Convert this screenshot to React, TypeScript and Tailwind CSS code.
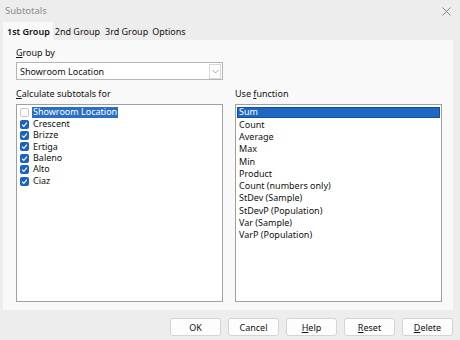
import React from "react";

const U = ({ c }: { c: string }) => <span className="underline underline-offset-[1px]">{c}</span>;

const leftItems = ["Crescent", "Brizze", "Ertiga", "Baleno", "Alto", "Ciaz"];
const funcs = [
  "Count",
  "Average",
  "Max",
  "Min",
  "Product",
  "Count (numbers only)",
  "StDev (Sample)",
  "StDevP (Population)",
  "Var (Sample)",
  "VarP (Population)",
];

function Check() {
  return (
    <span className="w-[9px] h-[9px] rounded-[2px] bg-[#1a62bd] flex items-center justify-center shrink-0">
      <svg width="7" height="7" viewBox="0 0 8 8">
        <path d="M1.2 4.2 L3.2 6.1 L6.8 1.8" stroke="white" strokeWidth="1.3" fill="none" />
      </svg>
    </span>
  );
}

function Btn({ children }: { children: React.ReactNode }) {
  return (
    <div className="w-[51px] h-[18px] bg-[#fdfdfd] border border-[#d4d4d4] rounded-[3px] flex items-center justify-center text-[9px] leading-[11px] text-[#111]">
      {children}
    </div>
  );
}

export default function App() {
  return (
    <div
      className="w-[460px] h-[340px] bg-[#ededed] flex flex-col text-[#111] overflow-hidden"
      style={{ fontFamily: '"Noto Sans", "Open Sans", sans-serif' }}
    >
      <div className="h-[22px] flex items-center justify-between pl-[5px] pr-[9px] shrink-0">
        <span className="text-[9.5px] text-[#8c8c8c] leading-[12px]">Subtotals</span>
        <svg width="9" height="9" viewBox="0 0 9 9">
          <path d="M0.5 0.5 L8.5 8.5 M8.5 0.5 L0.5 8.5" stroke="#7a7a7a" strokeWidth="0.9" />
        </svg>
      </div>
      <div className="h-[18px] flex items-end pl-[3px] text-[9px] leading-[11px] shrink-0">
        <div className="h-[18px] pl-[4px] pr-[3px] bg-[#f9f9f9] flex items-center font-semibold">1st Group</div>
        <div className="h-[18px] px-[2px] flex items-center">2nd Group</div>
        <div className="h-[18px] px-[3px] flex items-center">3rd Group</div>
        <div className="h-[18px] px-[1px] flex items-center">Options</div>
      </div>
      <div className="ml-[3px] w-[450px] h-[270px] bg-[#f9f9f9] pl-[13px] pt-[7px] flex flex-col shrink-0 text-[9px]">
        <div className="h-[12px] leading-[12px]">
          <U c="G" />roup by
        </div>
        <div className="mt-[3px] w-[207px] h-[18px] bg-white border border-[#b5b5b5] flex items-center pl-[3px] pr-[1px]">
          <span className="flex-1 leading-[11px]">Showroom Location</span>
          <span className="w-[12px] h-[15px] border border-[#d8d8d8] flex items-center justify-center">
            <svg width="7" height="5" viewBox="0 0 7 5">
              <path d="M0.5 1 L3.5 4 L6.5 1" stroke="#9a9a9a" strokeWidth="0.9" fill="none" />
            </svg>
          </span>
        </div>
        <div className="flex gap-[12px] mt-[8px]">
          <div className="flex flex-col w-[207px]">
            <div className="h-[12px] leading-[12px]">
              <U c="C" />alculate subtotals for
            </div>
            <div className="mt-[4px] h-[198px] bg-white border border-[#a0a0a0] pt-[2px] pl-[3px]">
              <div className="h-[11.4px] flex items-center gap-[3px]">
                <span className="w-[9px] h-[9px] rounded-[2px] border border-[#c8c8c8] bg-white shrink-0" />
                <span className="bg-[#2a6fc4] text-white px-[1px] leading-[10.5px]">Showroom Location</span>
              </div>
              {leftItems.map((t) => (
                <div key={t} className="h-[11.4px] flex items-center gap-[4px]">
                  <Check />
                  <span className="leading-[10.5px]">{t}</span>
                </div>
              ))}
            </div>
          </div>
          <div className="flex flex-col w-[207px]">
            <div className="h-[12px] leading-[12px]">
              Use <U c="f" />unction
            </div>
            <div className="mt-[4px] h-[198px] bg-white border border-[#a0a0a0] pt-[2px] px-[1px]">
              <div className="h-[11px] bg-[#1f68c1] border border-[#0e4f9e] text-white flex items-center pl-[1px] leading-[10.5px]">
                Sum
              </div>
              {funcs.map((t) => (
                <div key={t} className="h-[12.3px] flex items-center pl-[2px] leading-[11px]">
                  {t}
                </div>
              ))}
            </div>
          </div>
        </div>
      </div>
      <div className="flex justify-end gap-[7px] pr-[7px] mt-[8px]">
        <Btn>OK</Btn>
        <Btn>Cancel</Btn>
        <Btn>
          <U c="H" />elp
        </Btn>
        <Btn>
          <U c="R" />eset
        </Btn>
        <Btn>
          <U c="D" />elete
        </Btn>
      </div>
    </div>
  );
}
